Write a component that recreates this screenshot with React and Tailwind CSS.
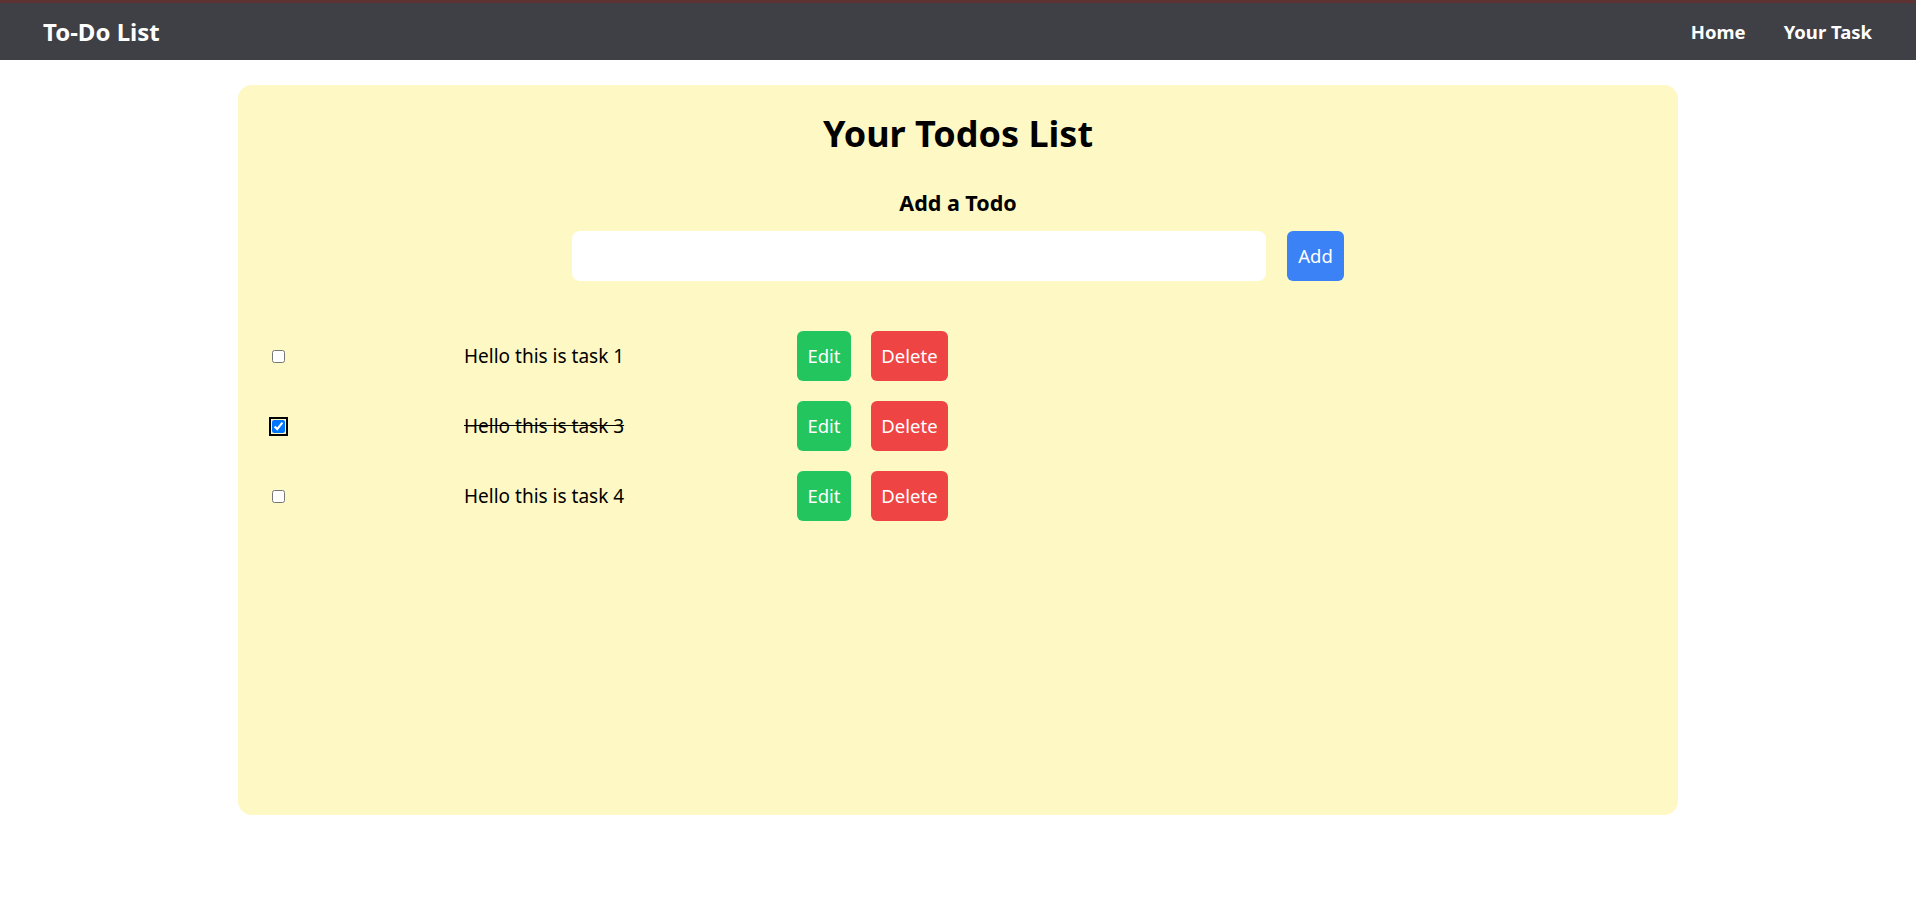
import React from "react";

const todos = [
  { id: 1, text: "Hello this is task 1", done: false },
  { id: 3, text: "Hello this is task 3", done: true },
  { id: 4, text: "Hello this is task 4", done: false },
];

export default function App() {
  return (
    <div className="min-h-screen bg-white text-black" style={{ fontFamily: "'Noto Sans', sans-serif" }}>
      <div className="h-[3px] bg-[#5c3232]" />
      <nav className="flex h-[57px] items-center justify-between bg-[#3f4046] pl-[43px] pr-[44px] text-white">
        <span className="text-[24px] font-bold">To-Do List</span>
        <ul className="flex items-center gap-[38px] text-[18.5px] font-bold">
          <li>Home</li>
          <li>Your Task</li>
        </ul>
      </nav>
      <div className="mx-auto mt-[25px] min-h-[730px] w-[1440px] rounded-[14px] bg-[#fef8c4] pt-[27px]">
        <h1 className="text-center text-[36px] font-bold leading-[44px]">Your Todos List</h1>
        <h2 className="mt-[33px] text-center text-[21.5px] font-bold leading-[28px]">Add a Todo</h2>
        <div className="mt-[14px] flex items-center justify-center gap-[21px]">
          <input type="text" className="h-[50px] w-[694px] rounded-lg bg-white px-3 outline-none" />
          <button className="h-[50px] w-[57px] rounded-md bg-[#3b82f6] text-[18.5px] text-white">Add</button>
        </div>
        <div className="mt-[50px] flex flex-col gap-[20px] pl-[34px]">
          {todos.map((t) => (
            <div key={t.id} className="flex h-[50px] items-center">
              <div className="flex w-[192px] items-center">
                <input
                  type="checkbox"
                  defaultChecked={t.done}
                  className={
                    t.done
                      ? "m-0 h-[13px] w-[13px] rounded-sm outline outline-2 outline-offset-1 outline-black"
                      : "m-0 h-[13px] w-[13px]"
                  }
                />
              </div>
              <div className={"w-[333px] text-[19px] " + (t.done ? "line-through" : "")}>{t.text}</div>
              <div className="flex items-center gap-[20px]">
                <button className="h-[50px] w-[54px] rounded-md bg-[#22c55e] text-[18.5px] text-white">Edit</button>
                <button className="h-[50px] w-[77px] rounded-md bg-[#ef4444] text-[18.5px] text-white">Delete</button>
              </div>
            </div>
          ))}
        </div>
      </div>
    </div>
  );
}
